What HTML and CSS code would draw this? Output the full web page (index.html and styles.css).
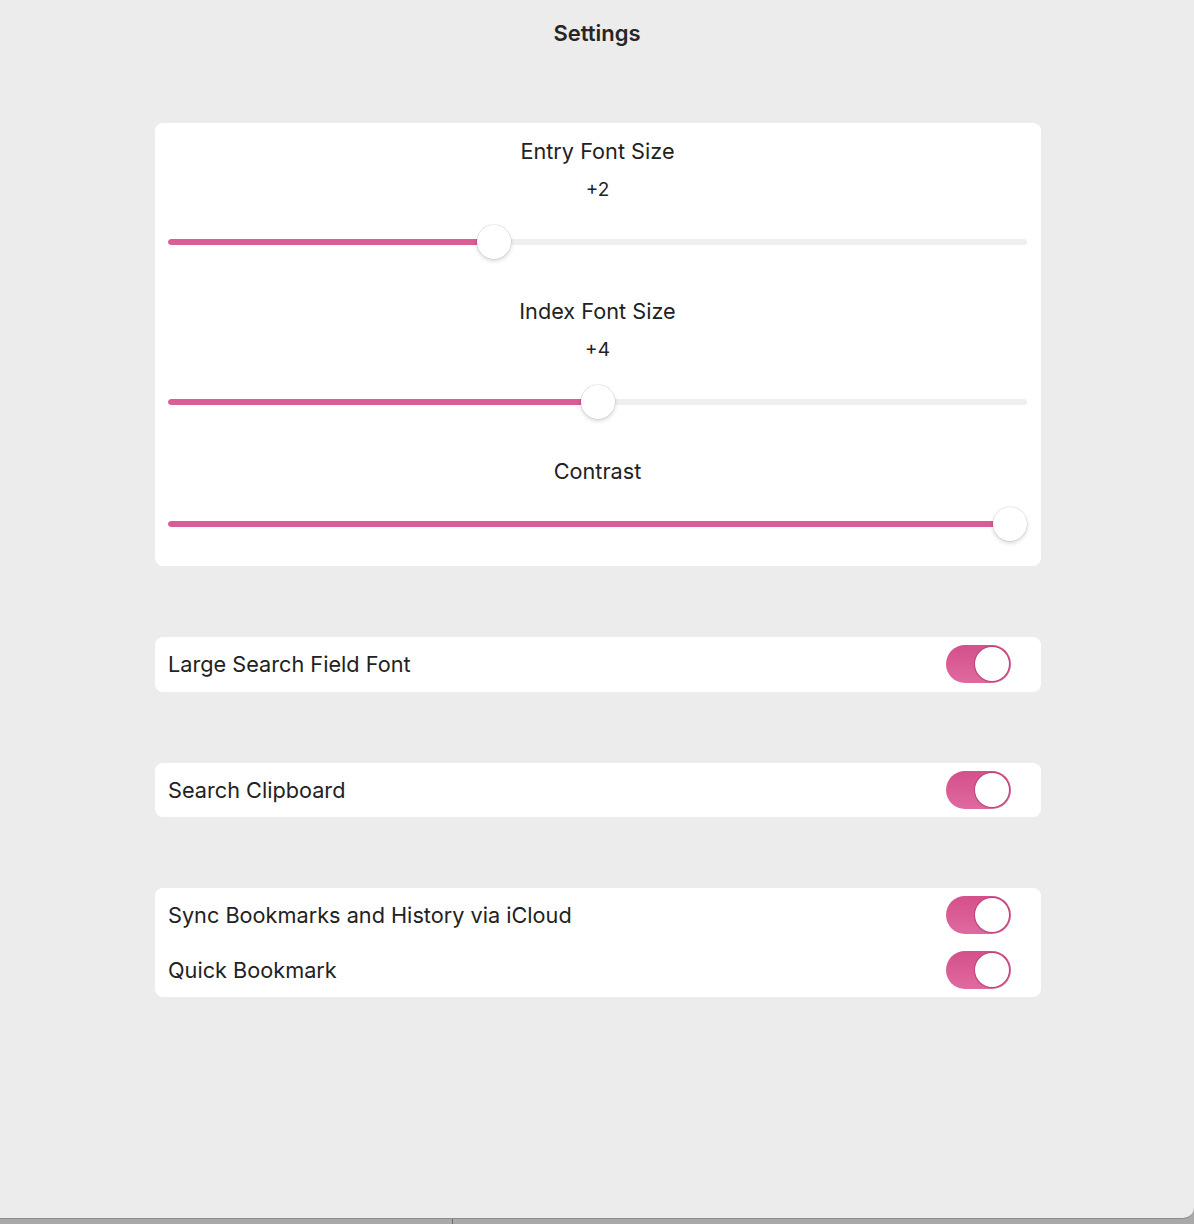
FILE: index.html
```html
<!DOCTYPE html>
<html>
<head>
<meta charset="utf-8">
<link rel="stylesheet" href="styles.css">
</head>
<body>
<div class="window">
  <h1 class="title">Settings</h1>
  <div class="cards">
    <section class="card sliders">
      <div class="slider-group">
        <div class="label">Entry Font Size</div>
        <div class="value">+2</div>
        <div class="slider">
          <div class="track"><div class="fill" style="width: calc(17px + 0.375 * (100% - 34px))"></div></div>
          <div class="thumb" style="left: calc(0.375 * (100% - 34px))"></div>
        </div>
      </div>
      <div class="slider-group">
        <div class="label">Index Font Size</div>
        <div class="value">+4</div>
        <div class="slider">
          <div class="track"><div class="fill" style="width: calc(17px + 0.5 * (100% - 34px))"></div></div>
          <div class="thumb" style="left: calc(0.5 * (100% - 34px))"></div>
        </div>
      </div>
      <div class="slider-group last">
        <div class="label">Contrast</div>
        <div class="slider">
          <div class="track"><div class="fill" style="width: calc(17px + 1 * (100% - 34px))"></div></div>
          <div class="thumb" style="left: calc(1 * (100% - 34px))"></div>
        </div>
      </div>
    </section>

    <section class="card">
      <div class="row"><span class="row-label">Large Search Field Font</span><span class="toggle on"><span class="knob"></span></span></div>
    </section>

    <section class="card">
      <div class="row"><span class="row-label">Search Clipboard</span><span class="toggle on"><span class="knob"></span></span></div>
    </section>

    <section class="card">
      <div class="row"><span class="row-label">Sync Bookmarks and History via iCloud</span><span class="toggle on"><span class="knob"></span></span></div>
      <div class="row"><span class="row-label">Quick Bookmark</span><span class="toggle on"><span class="knob"></span></span></div>
    </section>
  </div>
</div>
<div class="dock">
  <div class="dock-left"></div>
  <div class="dock-right"></div>
</div>
</body>
</html>
```

FILE: styles.css
```css
* { box-sizing: border-box; }

html, body {
  margin: 0;
  padding: 0;
}

body {
  background: #a9a9a9;
  font-family: Inter, "Noto Sans", "Liberation Sans", sans-serif;
  color: #222222;
  height: 1224px;
  overflow: hidden;
}

.window {
  height: 1219px;
  background: #ececec;
  border-bottom-right-radius: 11px;
  border-bottom: 1px solid #8c8c8c;
  display: flex;
  flex-direction: column;
  align-items: center;
}

.title {
  margin: 0;
  padding-top: 20px;
  font-size: 22px;
  line-height: 26px;
  font-weight: 600;
  color: #262626;
}

.cards {
  width: 886px;
  margin-top: 77px;
  margin-left: 2px;
  display: flex;
  flex-direction: column;
  gap: 71px;
}

.card {
  background: #ffffff;
  border-radius: 8px;
}

.sliders {
  padding: 16px 14px 25px 13px;
}

.slider-group {
  display: flex;
  flex-direction: column;
  align-items: center;
  margin-bottom: 40px;
}
.slider-group.last {
  margin-top: 1px;
  margin-bottom: 0;
}

.label {
  font-size: 21.7px;
  line-height: 24px;
}

.value {
  font-size: 19px;
  line-height: 24px;
  margin-top: 15px;
}

.slider {
  position: relative;
  width: 100%;
  height: 34px;
  margin-top: 23px;
  display: flex;
  align-items: center;
}
.slider-group.last .slider { margin-top: 24px; }

.track {
  width: 100%;
  height: 6px;
  border-radius: 3px;
  background: #efefef;
  overflow: hidden;
}

.fill {
  height: 100%;
  background: #d95d96;
  border-radius: 3px 0 0 3px;
}

.thumb {
  position: absolute;
  top: 0;
  width: 34px;
  height: 34px;
  border-radius: 50%;
  background: #ffffff;
  box-shadow: 0 0 0 0.5px rgba(0,0,0,0.12), 0 2px 4px rgba(0,0,0,0.16);
}

.row {
  height: 54.5px;
  display: flex;
  align-items: center;
  justify-content: space-between;
  padding: 0 30px 0 13px;
}

.row-label {
  font-size: 21.7px;
  line-height: 24px;
}

.toggle {
  width: 65px;
  height: 38px;
  border-radius: 19px;
  background: linear-gradient(180deg, #d4508a 0%, #df6a9f 100%);
  display: flex;
  align-items: center;
  justify-content: flex-end;
  padding: 2px;
}

.knob {
  width: 34px;
  height: 34px;
  border-radius: 50%;
  background: #ffffff;
  box-shadow: 0 0 0 1px rgba(170, 40, 100, 0.45), 0 1px 2px rgba(0,0,0,0.15);
}

.dock {
  display: flex;
  height: 5px;
}
.dock-left {
  width: 453px;
  border-right: 1px solid #6e6e6e;
}
.dock-right { flex: 1; }
```
